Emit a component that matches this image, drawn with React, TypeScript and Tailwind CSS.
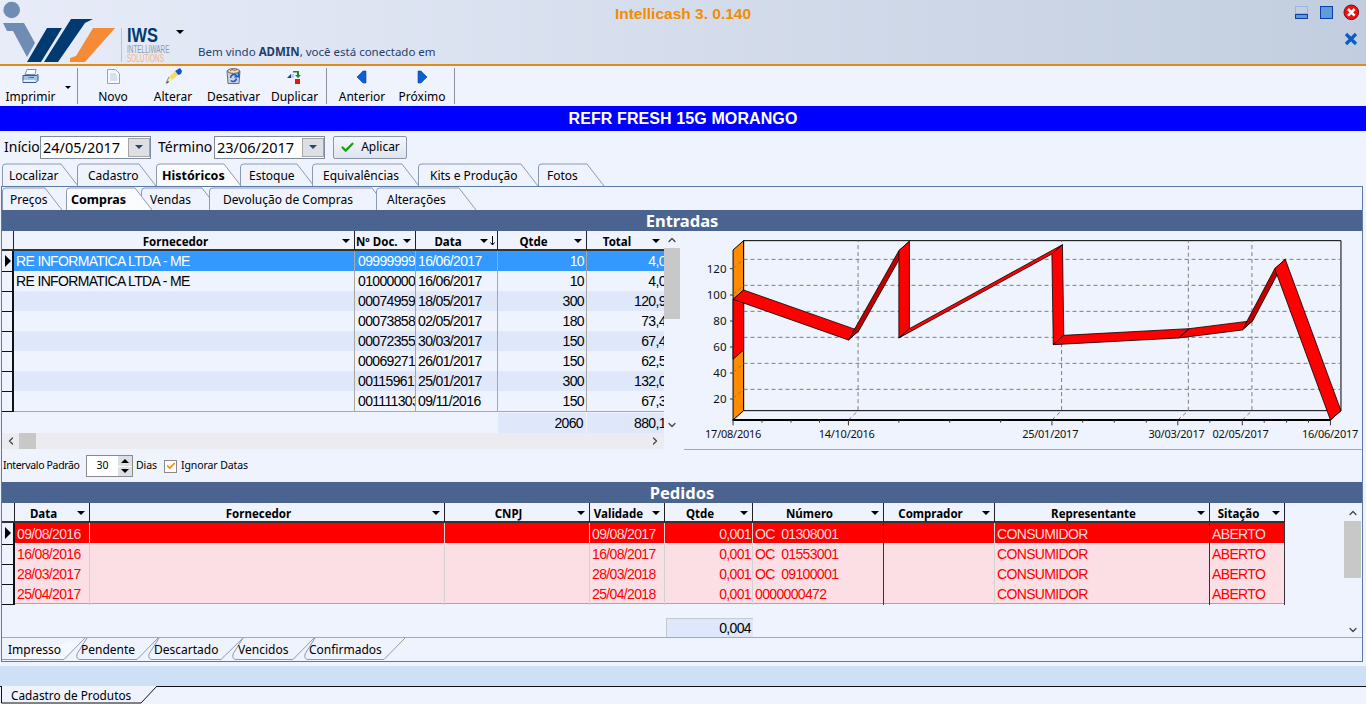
import { Check, ChevronDown, ChevronLeft, ChevronRight, ChevronUp } from "lucide-react";

type TabDef = { label: string; step: number; end: number; pad: number; active?: boolean };

const mainTabs: TabDef[] = [
  { label: "Localizar", step: 75, end: 76, pad: 7 },
  { label: "Cadastro", step: 79, end: 79, pad: 11 },
  { label: "Históricos", step: 84, end: 85, pad: 6, active: true },
  { label: "Estoque", step: 72, end: 74, pad: 9 },
  { label: "Equivalências", step: 106, end: 107, pad: 11 },
  { label: "Kits e Produção", step: 120, end: 120, pad: 12 },
  { label: "Fotos", step: 66, end: 66, pad: 9 },
];

const subTabs: TabDef[] = [
  { label: "Preços", step: 64, end: 60, pad: 8 },
  { label: "Compras", step: 75, end: 86, pad: 5, active: true },
  { label: "Vendas", step: 68, end: 78, pad: 9 },
  { label: "Devolução de Compras", step: 167, end: 180, pad: 14 },
  { label: "Alterações", step: 100, end: 100, pad: 11 },
];

const lowerTabs = [
  { label: "Impresso", left: 2, bottom: 64, top: 85, text: 8, active: true },
  { label: "Pendente", left: 76, bottom: 137, top: 158, text: 81 },
  { label: "Descartado", left: 148, bottom: 221, top: 243, text: 154 },
  { label: "Vencidos", left: 232, bottom: 293, top: 314, text: 238 },
  { label: "Confirmados", left: 304, bottom: 384, top: 405, text: 309 },
];

const entradas = [
  ["RE INFORMATICA LTDA - ME", "099999999", "16/06/2017", "10", "4,00"],
  ["RE INFORMATICA LTDA - ME", "010000000", "16/06/2017", "10", "4,00"],
  ["", "000749599", "18/05/2017", "300", "120,90"],
  ["", "000738584", "02/05/2017", "180", "73,40"],
  ["", "000723553", "30/03/2017", "150", "67,40"],
  ["", "000692711", "26/01/2017", "150", "62,50"],
  ["", "001159617", "25/01/2017", "300", "132,00"],
  ["", "001111303", "09/11/2016", "150", "67,30"],
];

const pedidos = [
  ["09/08/2016", "09/08/2017", "OC  01308001"],
  ["16/08/2016", "16/08/2017", "OC  01553001"],
  ["28/03/2017", "28/03/2018", "OC  09100001"],
  ["25/04/2017", "25/04/2018", "0000000472"],
];

function Caret({ className = "", color = "#000" }: { className?: string; color?: string }) {
  return (
    <svg width="8" height="4" viewBox="0 0 8 4" className={className}>
      <path d="M0 0h8L4 4z" fill={color} />
    </svg>
  );
}

function Logo() {
  return (
    <svg width="172" height="64" viewBox="0 0 172 64" className="absolute left-0 top-0">
      <circle cx="11.7" cy="10" r="8.3" fill="#6f8db3" />
      <path d="M3 23h21l11 20-8 14-14-26H7z" fill="#6f8db3" />
      <path d="M27 62h14l21-34H47z" fill="#003a70" />
      <path d="M44 62h14l27-39 8-4H71z" fill="#003a70" />
      <path d="M70 62h15l30-34H93L76 56l-6 2z" fill="#f68b36" />
      <rect x="121" y="28" width="1" height="34" fill="#b9c3d3" />
    </svg>
  );
}

function PrinterIcon() {
  return (
    <svg width="17" height="15" viewBox="0 0 17 15">
      <path d="M5 .5h9l-1 5H3z" fill="#fff" stroke="#6f8fb8" />
      <path d="M1 6.500h13l2-1v6l-2 2H1z" fill="#a9c3e4" stroke="#2d5a9e" />
      <rect x="1.500" y="11" width="12" height="2" fill="#e6eef9" />
      <rect x="6" y="8" width="3" height="1" fill="#2fb24a" />
      <rect x="9" y="8" width="3" height="1" fill="#e03020" />
    </svg>
  );
}

function DocIcon() {
  return (
    <svg width="13" height="15" viewBox="0 0 13 15">
      <path d="M.5.5h8l4 4v10H.5z" fill="#f4f7fc" stroke="#84a7d2" />
      <path d="M3 5h6M3 7h7M3 9h7M3 11h7" stroke="#b9c9e0" />
    </svg>
  );
}

function PencilIcon() {
  return (
    <svg width="17" height="16" viewBox="0 0 17 16">
      <path d="M10 3l5-3 2 3-1 3-3 1z" fill="#1450c8" />
      <path d="M4 9l6-6 3 4-6 5z" fill="#f2dc62" />
      <path d="M4 9l3 3-6 4z" fill="#f4eac0" />
      <path d="M1 16l2-3 1 1z" fill="#222" />
      <path d="M4 9L1 15" stroke="#4a5540" strokeWidth=".7" />
    </svg>
  );
}

function RecycleIcon() {
  return (
    <svg width="15" height="16" viewBox="0 0 15 16">
      <path d="M1 3h13l-1 12.500H2z" fill="#cfd4dc" stroke="#6a6f7a" />
      <ellipse cx="7.500" cy="3" rx="6" ry="2.400" fill="#ece3b0" stroke="#5a5f6b" />
      <path d="M4 3l2-1.500 3 1 2-1" stroke="#a33" strokeWidth=".8" fill="none" />
      <path d="M4.500 10a3.500 3.500 0 0 1 6-2.400l-1 1.200h3.200V5.600l-1 1" fill="none" stroke="#1b55d4" strokeWidth="1.600" />
      <path d="M10.500 10.500a3.500 3.500 0 0 1-5.800 2" fill="none" stroke="#1b55d4" strokeWidth="1.600" />
    </svg>
  );
}

function DuplicateIcon() {
  return (
    <svg width="15" height="14" viewBox="0 0 15 14">
      <path d="M0 8l4-4v4z" fill="#10408c" />
      <rect x="4" y="4" width="3" height="4" fill="#b9cfe9" />
      <path d="M6 1h6v4h2l-3 3-3-3h2V2.500H6z" fill="#1a8a2e" />
      <rect x="8" y="9" width="5" height="5" fill="#f01010" />
    </svg>
  );
}

function ArrowIcon({ left }: { left?: boolean }) {
  return (
    <svg width="12" height="14" viewBox="0 0 12 14">
      <path d={left ? "M1 7l6-6h3v12H7z" : "M11 7L5 1H2v12h3z"} fill="#0d5fd6" stroke="#0a3fa0" strokeWidth=".6" />
    </svg>
  );
}

function ToolButton({ icon, label, width }: { icon: React.ReactNode; label: string; width: string }) {
  return (
    <div className={`flex h-full flex-col items-center ${width}`}>
      <div className="flex h-[18px] items-end">{icon}</div>
      <div className="mt-[6px] text-[12px] leading-[14px]">{label}</div>
    </div>
  );
}

function ToolSep() {
  return <div className="mt-[2px] h-[36px] w-px bg-[#8c9099]" />;
}

function DateField({ value }: { value: string }) {
  return (
    <div className="flex h-[23px] w-[111px] items-center border border-[#7f8a9a] bg-white pl-[2px]">
      <span className="flex-1 text-[14.500px] leading-[20px]">{value}</span>
      <div className="flex h-[19px] w-[22px] items-center justify-center border border-[#a5a5a5] bg-[#dcdfe4]">
        <Caret color="#27476f" />
      </div>
    </div>
  );
}

function TabStrip({ tabs }: { tabs: TabDef[] }) {
  const height = 23;
  return (
    <div className="flex">
      {tabs.map((t) => (
        <div key={t.label} className={`relative h-[23px] shrink-0 ${t.active ? "z-10" : ""}`} style={{ width: t.step }}>
          <svg className="absolute left-0 top-0 overflow-visible" width={t.end} height={height}>
            <path
              d={`M0.5 ${height} V4 Q0.5 1 4 1 H${t.end - 17} L${t.end} ${height}`}
              fill={t.active ? "#fbfcff" : "#eff3fe"}
              stroke="#8b9ab2"
            />
          </svg>
          <span
            className={`absolute top-[4px] whitespace-nowrap leading-[18px] ${t.active ? "text-[12.500px] font-bold" : "text-[12px]"}`}
            style={{ left: t.pad }}
          >
            {t.label}
          </span>
        </div>
      ))}
    </div>
  );
}

function SectionBar({ title }: { title: string }) {
  return (
    <div className="flex h-[21px] items-center justify-center bg-[#4a648f] pt-[2px] text-[16.500px] font-bold text-white">
      {title}
    </div>
  );
}

function HeadCell({ label, sort = false, left = false, className = "" }: { label: string; sort?: boolean; left?: boolean; className?: string }) {
  return (
    <div className={`relative flex h-full items-center border-r border-[#222] pt-[2px] text-[11.500px] font-bold ${left ? "justify-start pl-[1px]" : "justify-center pr-[17px]"} ${className}`}>
      <span>{label}</span>
      <Caret className={`absolute top-[8px] ${sort ? "right-[9px]" : "right-[4px]"}`} />
      {sort && (
        <svg width="5" height="10" viewBox="0 0 5 10" className="absolute right-[2px] top-[5px]">
          <path d="M2.500 0v9M.5 6.500l2 2.500 2-2.500" fill="none" stroke="#000" />
        </svg>
      )}
    </div>
  );
}

function Indicator({ first }: { first: boolean }) {
  return (
    <div className="relative h-full border-r-2 border-b border-[#111]">
      {first && (
        <svg width="6" height="12" viewBox="0 0 6 12" className="absolute left-[3px] top-[4px]">
          <path d="M0 0l6 6-6 6z" fill="#000" />
        </svg>
      )}
    </div>
  );
}

function EntradasGrid() {
  return (
    <div className="relative h-[219px] w-[682px] shrink-0">
      <div className="absolute left-0 top-0 w-[662px] overflow-hidden">
        <div className="grid h-[20px] grid-cols-[12px_341px_61px_82px_89px_77px] border-b-2 border-[#333]">
          <div className="border-r border-[#222]" />
          <HeadCell label="Fornecedor" />
          <HeadCell label="Nº Doc." left />
          <HeadCell label="Data" sort />
          <HeadCell label="Qtde" />
          <HeadCell label="Total" className="border-r-0" />
        </div>
        {entradas.map((r, i) => (
          <div
            key={r[1]}
            className={`grid h-[20px] grid-cols-[12px_341px_61px_82px_89px_77px] font-['Liberation_Sans',sans-serif] text-[14px] leading-[21px] tracking-[-0.65px] ${i === 0 ? "bg-[#3399ff] text-white" : i % 2 === 1 ? "bg-[#eff3fe] text-black" : "bg-[#dfe8fb] text-black"}`}
          >
            <div className="bg-[#eff3fe]">
              <Indicator first={i === 0} />
            </div>
            <div className="overflow-hidden whitespace-nowrap border-r border-[#a8a8a8] pl-[2px]">{r[0]}</div>
            <div className="overflow-hidden whitespace-nowrap border-r border-[#a8a8a8] pl-[3px]">{r[1]}</div>
            <div className="overflow-hidden whitespace-nowrap border-r border-[#a8a8a8] pl-[2px]">{r[2]}</div>
            <div className="border-r border-[#a8a8a8] pr-[2px] text-right">{r[3]}</div>
            <div className="overflow-hidden whitespace-nowrap">
              <div className="w-[86px] text-right">{r[4]}</div>
            </div>
          </div>
        ))}
        <div className="h-px bg-[#a8a8a8]" />
        <div className="mt-[1px] grid h-[20px] grid-cols-[12px_341px_61px_82px_89px_77px] font-['Liberation_Sans',sans-serif] text-[14px] leading-[20px] tracking-[-0.65px]">
          <div className="col-span-4" />
          <div className="mr-px bg-[#dfe8fb] pr-[3px] text-right">2060</div>
          <div className="overflow-hidden whitespace-nowrap bg-[#dfe8fb]">
            <div className="w-[86px] text-right">880,10</div>
          </div>
        </div>
      </div>
      <div className="absolute left-[662px] top-0 flex h-[202px] w-[16px] flex-col items-center">
        <ChevronUp size={12} strokeWidth={2.500} className="mt-[3px] text-[#444]" />
        <div className="mt-[2px] h-[71px] w-full bg-[#c8c8c8]" />
        <div className="flex-1" />
        <ChevronDown size={12} strokeWidth={2.500} className="mb-[2px] text-[#444]" />
      </div>
      <div className="absolute left-0 top-[202px] flex h-[16px] w-[662px] items-center justify-between bg-[#ececf0] px-[3px]">
        <ChevronLeft size={12} strokeWidth={2.500} className="text-[#444]" />
        <div className="absolute left-[17px] top-0 h-[16px] w-[17px] bg-[#c8c8c8]" />
        <ChevronRight size={12} strokeWidth={2.500} className="text-[#444]" />
      </div>
    </div>
  );
}

const ax = (zx: number) => zx * 0.4386 - 4;
const ay = (zy: number) => zy / 3 - 1;
const pts = (list: number[][]) => list.map(([x, y]) => `${ax(x)},${ay(y)}`).join(" ");

const ribbon = [
  { a: [121, 388], b: [121, 208], fill: "#ff0000" },
  { a: [121, 208], b: [384, 330], fill: "#ff0000" },
  { a: [384, 330], b: [499, 62], fill: "#c00000" },
  { a: [499, 62], b: [499, 324], fill: "#ff0000" },
  { a: [499, 324], b: [848, 72], fill: "#ff0000" },
  { a: [848, 72], b: [851, 344], fill: "#ff0000" },
  { a: [851, 344], b: [1137, 324], fill: "#ff0000" },
  { a: [1137, 324], b: [1282, 300], fill: "#ff0000" },
  { a: [1282, 300], b: [1356, 116], fill: "#c00000" },
  { a: [1356, 116], b: [1483, 570], fill: "#ff0000" },
];

const dash = "#7d7d7d";

function Chart() {
  return (
    <svg width="678" height="218" viewBox="0 0 678 218" className="shrink-0">
      <polygon points={pts([[145, 32], [1507, 32], [1507, 542], [145, 542]])} fill="#eff3fe" stroke="#000" />
      <polygon points={pts([[121, 60], [145, 32], [145, 542], [121, 570]])} fill="#ff8c00" stroke="#000" />
      {[88, 166, 244, 322, 400, 478].map((y) => (
        <path key={y} d={`M${ax(121)} ${ay(y + 28)}L${ax(145)} ${ay(y)}H${ax(1507)}`} fill="none" stroke={dash} strokeDasharray="4 3" />
      ))}
      {[[384, 406], [848, 870], [1135, 1159], [1282, 1304]].map(([f, b]) => (
        <path key={f} d={`M${ax(f)} ${ay(570)}L${ax(b)} ${ay(542)}V${ay(32)}`} fill="none" stroke={dash} strokeDasharray="4 3" />
      ))}
      <path d={`M${ax(121)} ${ay(570)}H${ax(1483)}L${ax(1507)} ${ay(542)}`} fill="none" stroke="#000" strokeWidth="1" />
      <rect x={ax(121) - 0.5} y={ay(570) - 1} width={ax(1483) - ax(121) + 1} height="2" fill="#000" />
      {ribbon.map((s, i) => (
        <polygon
          key={i}
          points={pts([s.a, s.b, [s.b[0] + 24, s.b[1] - 28], [s.a[0] + 24, s.a[1] - 28]])}
          fill={s.fill}
          stroke="#000"
          strokeWidth=".8"
        />
      ))}
      {[121, 187, 253, 318, 384, 499, 615, 731, 848, 918, 990, 1063, 1135, 1208, 1282, 1332, 1383, 1433, 1483].map((x) => (
        <line key={x} x1={ax(x)} x2={ax(x)} y1={ay(570)} y2={ay(x === 121 || x === 384 || x === 848 || x === 1135 || x === 1282 || x === 1483 ? 586 : 578)} stroke="#333" />
      ))}
      {[[120, 116], [100, 195], [80, 273], [60, 351], [40, 429], [20, 507]].map(([v, y]) => (
        <g key={v}>
          <line x1={ax(114)} x2={ax(121)} y1={ay(y)} y2={ay(y)} stroke="#333" />
          <text x={ax(106)} y={ay(y) + 4} textAnchor="end" fontSize="11.500" fill="#111">{v}</text>
        </g>
      ))}
      {[["17/08/2016", 121], ["14/10/2016", 380], ["25/01/2017", 844], ["30/03/2017", 1132], ["02/05/2017", 1278], ["16/06/2017", 1482]].map(([l, x]) => (
        <text key={l} x={ax(x as number)} y="207" textAnchor="middle" fontSize="11" letterSpacing="-0.25" fill="#111">{l}</text>
      ))}
    </svg>
  );
}

const pedCols = "grid-cols-[13px_75px_355px_145px_75px_88px_131px_111px_215px_75px]";

function PedidosGrid() {
  return (
    <div className="relative h-[135px]">
      <div className="w-[1283px]">
        <div className={`grid h-[20px] border-b-2 border-[#333] ${pedCols}`}>
          <div className="border-r border-[#222]" />
          <HeadCell label="Data" />
          <HeadCell label="Fornecedor" />
          <HeadCell label="CNPJ" />
          <HeadCell label="Validade" />
          <HeadCell label="Qtde" />
          <HeadCell label="Número" />
          <HeadCell label="Comprador" />
          <HeadCell label="Representante" />
          <HeadCell label="Sitação" />
        </div>
        {pedidos.map((r, i) => (
          <div
            key={r[2]}
            className={`grid h-[20px] font-['Liberation_Sans',sans-serif] text-[14px] leading-[22px] tracking-[-0.65px] ${pedCols} ${i === 0 ? "bg-[#ff0000] text-[#ffd9dc]" : "bg-[#fbdfe4] text-[#ff0000]"}`}
          >
            <div className="bg-[#eff3fe]">
              <Indicator first={i === 0} />
            </div>
            <div className="border-r border-[#d2d2d2] pl-[2px]">{r[0]}</div>
            <div className="border-r border-[#d2d2d2]" />
            <div className="border-r border-[#d2d2d2]" />
            <div className="border-r border-[#d2d2d2] pl-[2px]">{r[1]}</div>
            <div className="border-r border-[#d2d2d2] pr-[1px] text-right">0,001</div>
            <div className="whitespace-pre border-r border-[#333] pl-[2px]">{r[2]}</div>
            <div className="border-r border-[#d2d2d2]" />
            <div className="border-r border-[#333] pl-[2px]">CONSUMIDOR</div>
            <div className="border-r border-[#333] pl-[2px]">ABERTO</div>
          </div>
        ))}
        <div className="h-px bg-[#a8a8a8]" />
        <div className="ml-[664px] mt-[14px] h-[19px] w-[87px] border-l border-t border-[#c4c8d0] bg-[#dfe8fb] pr-[2px] text-right font-['Liberation_Sans',sans-serif] text-[14px] leading-[18px] tracking-[-0.65px]">
          0,004
        </div>
      </div>
      <div className="absolute right-[1px] top-0 flex h-[135px] w-[17px] flex-col items-center">
        <ChevronUp size={12} strokeWidth={2.500} className="mt-[4px] text-[#444]" />
        <div className="mt-[2px] h-[57px] w-full bg-[#c8c8c8]" />
        <div className="flex-1" />
        <ChevronDown size={12} strokeWidth={2.500} className="mb-[2px] text-[#444]" />
      </div>
    </div>
  );
}

function LowerTabs() {
  return (
    <div className="relative h-[24px] border-t border-[#a8a8a8]">
      {lowerTabs.map((t) => (
        <div key={t.label} className="contents">
          <svg className="absolute left-0 top-0" width="420" height="23">
            <path
              d={
                t.active
                  ? `M${t.left - 2} 21.5 H${t.bottom - 2} L${t.top - 2} 0`
                  : `M${t.left + 9} 0 L${t.left - 1} 16 Q${t.left - 2} 21.5 ${t.left + 2} 21.5 H${t.bottom - 2} L${t.top - 2} 0`
              }
              fill={t.active ? "#f6f8ff" : "#eff3fe"}
              stroke="#8b9ab2"
            />
          </svg>
          <span className="absolute top-[3px] whitespace-nowrap text-[12px] leading-[18px]" style={{ left: t.text - 2 }}>
            {t.label}
          </span>
        </div>
      ))}
    </div>
  );
}

export default function App() {
  return (
    <div className="flex h-[704px] w-[1366px] flex-col overflow-hidden bg-[#eff3fe] font-['Noto_Sans',sans-serif] text-black">
      <header className="relative h-[66px] shrink-0 border-b-2 border-[#e08a1e] bg-gradient-to-r from-[#e8ecf9] to-[#c2cedf]">
        <Logo />
        <div className="absolute left-[127px] top-[25px] font-['Liberation_Sans',sans-serif] text-[#003a70]">
          <div className="origin-left scale-x-[0.82] text-[20px] font-bold leading-[20px]">IWS</div>
          <div className="origin-left scale-x-[0.64] whitespace-nowrap text-[10px] leading-[9px] text-[#8d98a8]">INTELLIWARE</div>
          <div className="origin-left scale-x-[0.64] whitespace-nowrap text-[10px] leading-[9px] text-[#f3b27c]">SOLUTIONS</div>
        </div>
        <Caret className="absolute left-[176px] top-[30px]" />
        <div className="absolute left-[198px] top-[44px] text-[11.500px] leading-[16px] text-[#1c3f6e]">
          Bem vindo <b>ADMIN</b>, você está conectado em
        </div>
        <div className="absolute left-0 right-0 top-[5px] text-center font-['Liberation_Sans',sans-serif] text-[15.500px] font-bold leading-[18px] text-[#f28c00]">
          Intellicash 3. 0.140
        </div>
        <svg width="72" height="50" viewBox="0 0 72 50" className="absolute right-0 top-0">
          <rect x="1.500" y="6.500" width="12" height="7" fill="none" stroke="#6f9ed6" strokeDasharray="1 1" />
          <rect x="1.500" y="14.500" width="12" height="4" fill="#5f9bd5" stroke="#0a3fae" />
          <rect x="26.500" y="6.500" width="12" height="12" fill="#5f9bd5" stroke="#0a3fae" />
          <circle cx="57.300" cy="12.300" r="7.300" fill="#f01010" stroke="#7a0a0a" />
          <path d="M54 9l6.600 6.600M60.600 9L54 15.600" stroke="#fff" strokeWidth="2.600" />
          <path d="M52 34l10 10M62 34L52 44" stroke="#0a5cc8" strokeWidth="3.200" />
        </svg>
      </header>

      <div className="flex h-[40px] shrink-0 items-start">
        <div className="relative w-[77px] shrink-0">
          <ToolButton icon={<PrinterIcon />} label="Imprimir" width="w-[61px]" />
          <Caret className="absolute left-[65px] top-[20px] h-[3px] w-[6px]" />
        </div>
        <ToolSep />
        <div className="w-[5px]" />
        <ToolButton icon={<DocIcon />} label="Novo" width="w-[60px]" />
        <ToolButton icon={<PencilIcon />} label="Alterar" width="w-[60px]" />
        <ToolButton icon={<RecycleIcon />} label="Desativar" width="w-[61px]" />
        <ToolButton icon={<DuplicateIcon />} label="Duplicar" width="w-[61px]" />
        <div className="w-[1px]" />
        <ToolSep />
        <div className="w-[5px]" />
        <ToolButton icon={<ArrowIcon left />} label="Anterior" width="w-[60px]" />
        <ToolButton icon={<ArrowIcon />} label="Próximo" width="w-[60px]" />
        <div className="w-[2px]" />
        <ToolSep />
      </div>

      <div className="flex h-[25px] shrink-0 items-center justify-center bg-[#0000ff] font-['Liberation_Sans',sans-serif] text-[16px] font-bold tracking-[0.1px] text-white">
        REFR FRESH 15G MORANGO
      </div>

      <div className="flex h-[32px] shrink-0 items-center pl-[4px]">
        <span className="w-[36px] pb-[2px] text-[14px]">Início</span>
        <DateField value="24/05/2017" />
        <span className="ml-[7px] w-[56px] pb-[2px] text-[14px]">Término</span>
        <DateField value="23/06/2017" />
        <button className="ml-[8px] flex h-[23px] w-[74px] items-center justify-center gap-[6px] rounded-[2px] border border-[#8a97a8] bg-gradient-to-b from-[#f4f6fb] to-[#dfe5ef] text-[12px]">
          <Check size={15} strokeWidth={3.500} className="text-[#12a012]" />
          Aplicar
        </button>
      </div>

      <div className="h-[23px] shrink-0 pl-[2px]">
        <TabStrip tabs={mainTabs} />
      </div>

      <div className="ml-[1px] mr-[3px] flex h-[476px] shrink-0 flex-col border border-[#5b7aa6]">
        <TabStrip tabs={subTabs} />
        <SectionBar title="Entradas" />
        <div className="flex h-[219px] shrink-0">
          <EntradasGrid />
          <div className="flex-1 border-b border-[#a8a8a8]">
            <Chart />
          </div>
        </div>
        <div className="flex h-[32px] shrink-0 items-center text-[10.500px] tracking-[-0.1px]">
          <span className="ml-[1px] w-[83px] whitespace-nowrap tracking-[-0.35px]">Intervalo Padrão</span>
          <div className="flex h-[22px] w-[47px] items-center border border-[#8a8a8a] bg-white">
            <span className="flex-1 text-center">30</span>
            <div className="flex h-[20px] w-[14px] flex-col gap-px">
              <div className="flex flex-1 items-center justify-center bg-[#dcdfe5]">
                <Caret className="rotate-180" />
              </div>
              <div className="flex flex-1 items-center justify-center bg-[#dcdfe5]">
                <Caret />
              </div>
            </div>
          </div>
          <span className="ml-[3px] w-[28px]">Dias</span>
          <div className="flex h-[13px] w-[13px] items-center justify-center border border-[#8a8a8a] bg-white">
            <Check size={10} strokeWidth={4} className="text-[#f28c00]" />
          </div>
          <span className="ml-[4px]">Ignorar Datas</span>
        </div>
        <SectionBar title="Pedidos" />
        <PedidosGrid />
        <LowerTabs />
      </div>

      <div className="h-[4px] shrink-0" />
      <div className="h-[20px] shrink-0 bg-[#cee0f5]" />
      <div className="relative flex-1 border-t border-[#111]">
        <svg width="160" height="18" className="absolute left-0 top-[-1px]">
          <path d="M1.500 0V17H141L157 0" fill="#eff3fe" stroke="#111" />
        </svg>
        <span className="absolute left-[11px] top-0 text-[11.800px] leading-[17px]">Cadastro de Produtos</span>
      </div>
    </div>
  );
}
